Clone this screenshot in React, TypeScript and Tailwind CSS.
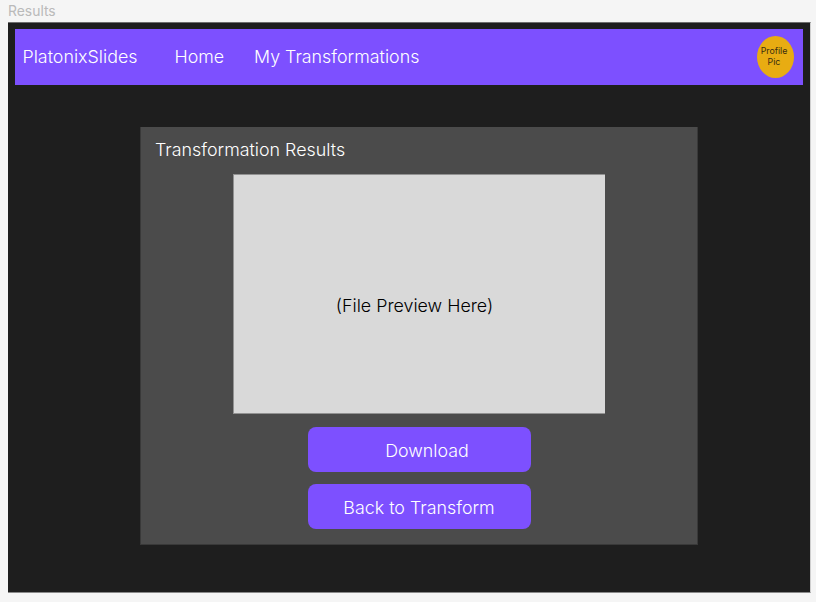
export default function App() {
  return (
    <div className="flex h-[602px] w-[816px] flex-col overflow-hidden bg-[#f5f5f5] pl-2 font-['Inter',sans-serif] font-light">
      <div className="h-[22px] pt-[3px] text-[13.9px] leading-[16px] font-normal text-[#bababa]">Results</div>
      <main className="h-[571px] w-[803px] border-t border-r border-b border-t-[#6e6e6e] border-r-[#cfcfcf] border-b-[#8a8a8a] bg-[#1e1e1e] px-[7px] pt-[6px]">
        <nav className="flex h-[56px] w-[788px] bg-[#7d50ff] pl-[7.5px] text-[17.85px] leading-[22px] text-white">
          <span className="mt-4 w-[152px] pt-[0.5px] whitespace-nowrap">PlatonixSlides</span>
          <span className="mt-4 w-[79.5px] pt-[0.5px] whitespace-nowrap">Home</span>
          <span className="mt-4 pt-[0.5px] whitespace-nowrap">My Transformations</span>
          <div className="mt-[7px] mr-[9px] ml-auto h-[42px] w-[37px] rounded-[50%] bg-[#e8ac12] pt-[9px] pr-[3px] text-center text-[8.8px] leading-[11px] font-normal text-[#3a2c10]">
            Profile<br />Pic
          </div>
        </nav>
        <section className="mt-[42px] ml-[125px] flex h-[418px] w-[558px] flex-col items-center border-r border-b border-l border-[#393939] bg-[#4b4b4b]">
          <h1 className="mt-3 w-full pl-[14px] text-[17.85px] leading-[22px] text-white">Transformation Results</h1>
          <div className="mt-[13px] flex h-[240px] w-[372px] items-center justify-center border-t border-b border-l border-[#929292] bg-[#d9d9d9] pt-[23px] pr-[10px] text-[17.85px] leading-[22px] text-black">(File Preview Here)</div>
          <button className="mt-[13px] h-[45px] w-[223px] rounded-lg bg-[#7d50ff] pt-[3px] pl-4 text-[17.85px] leading-[22px] text-white">Download</button>
          <button className="mt-[12px] h-[45px] w-[223px] rounded-lg bg-[#7d50ff] pt-[3px] text-[17.85px] leading-[22px] text-white">Back to Transform</button>
        </section>
      </main>
    </div>
  );
}
